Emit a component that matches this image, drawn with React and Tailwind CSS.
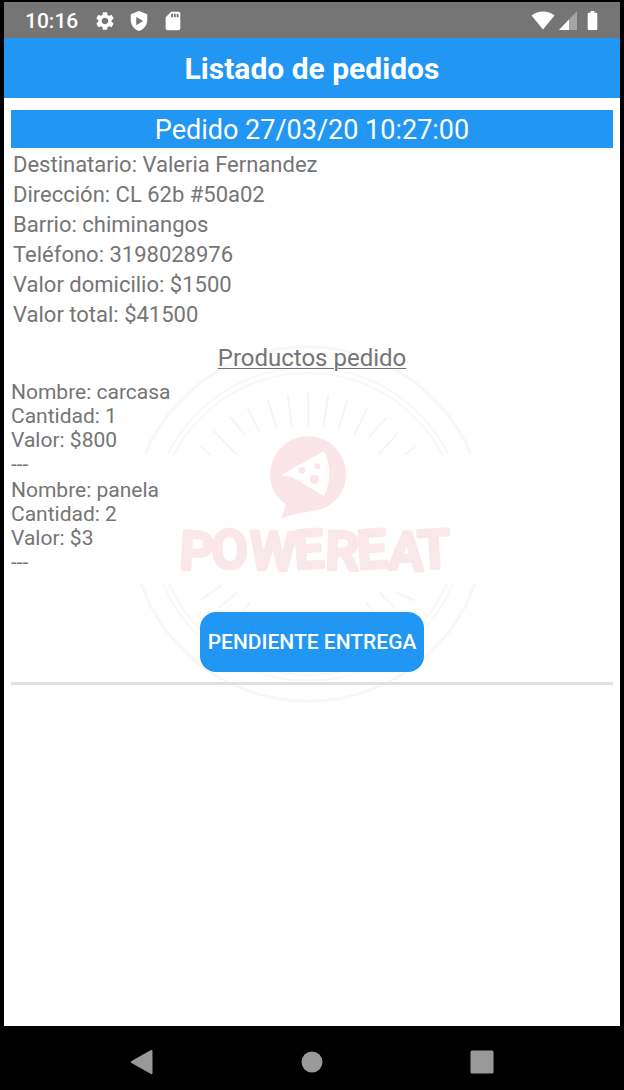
import React from "react";
import { MdSettings, MdSdCard, MdBatteryFull } from "react-icons/md";

const pedido = {
  fecha: "27/03/20 10:27:00",
  datos: [
    ["Destinatario", "Valeria Fernandez"],
    ["Dirección", "CL 62b #50a02"],
    ["Barrio", "chiminangos"],
    ["Teléfono", "3198028976"],
    ["Valor domicilio", "$1500"],
    ["Valor total", "$41500"],
  ],
  productos: [
    { nombre: "carcasa", cantidad: 1, valor: 800 },
    { nombre: "panela", cantidad: 2, valor: 3 },
  ],
};

const StatusBar = () => (
  <div className="flex h-9 items-center justify-between bg-[#757575] pt-px pr-4 pl-[21px] text-white">
    <div className="flex items-center">
      <span className="text-[21px] leading-6 font-medium">10:16</span>
      <MdSettings className="ml-4 size-[22px]" />
      <svg viewBox="0 0 24 24" className="ml-3 size-[22px]" fill="currentColor" fillRule="evenodd">
        <path d="M12 1 L21 4.5 V11 C21 17 17 21.3 12 23 C7 21.3 3 17 3 11 V4.5 Z M9 7.5 V16.5 L16.5 12 Z" />
      </svg>
      <MdSdCard className="ml-3 size-[22px]" />
    </div>
    <div className="flex items-center">
      <svg viewBox="0 0 24 19" className="h-[19px] w-6" fill="currentColor">
        <path d="M0.5 4.5 C7 -0.8 17 -0.8 23.5 4.5 L12 18.5 Z" />
      </svg>
      <svg viewBox="0 0 18 19" className="ml-1 h-[19px] w-[18px]" fill="currentColor">
        <path d="M18 0 V19 H0 Z" opacity="0.35" />
        <path d="M10 8.5 V19 H0 Z" />
      </svg>
      <MdBatteryFull className="ml-1 size-[23px]" />
    </div>
  </div>
);

/** Powereat seal shown behind the order list. */
const Watermark = () => (
  <svg
    viewBox="6 0 1140 1125"
    className="pointer-events-none absolute top-[232px] left-1/2 w-[380px] -translate-x-1/2"
    aria-hidden
  >
    <defs>
      <clipPath id="sealHalves">
        <rect width="1146" height="376" />
        <rect y="762" width="1146" height="363" />
      </clipPath>
    </defs>
    {/* rings */}
    <g clipPath="url(#sealHalves)" fill="none" stroke="#f7f7f7">
      <circle cx="564" cy="582" r="532" strokeWidth="9" />
      <circle cx="564" cy="582" r="470" strokeWidth="5" />
      <circle cx="564" cy="582" r="453" strokeWidth="5" />
    </g>
    {/* rays */}
    <path
      d="M243 350L270 374M282 303L350 374M330 262L378 316M382 232L420 308M443 208L472 300M503 195L515 290M565 188V290M625 195L610 290M683 208L655 300M742 235L703 315M800 262L748 320M835 308L775 374M885 350L855 374M350 788L295 835M305 765L243 810M388 818L372 840M822 785L885 812M780 788L825 835M740 818L755 840"
      fill="none"
      stroke="#f5f5f5"
      strokeWidth="6"
    />
    {/* speech bubble */}
    <path
      d="M564 319 C630 319 678 370 678 433 C678 490 640 530 590 541 C550 548 515 553 485 565 L497 523 C466 502 451 470 451 433 C451 370 500 319 564 319 Z"
      fill="#fae5e8"
    />
    <path
      d="M485 434 L612 364 C634 405 634 455 612 498 L545 458 C535 445 527 456 522 443 C512 437 498 441 485 434 Z"
      fill="#fff"
    />
    <g fill="#fae5e8">
      <circle cx="546" cy="421" r="10" />
      <circle cx="592" cy="409" r="9" />
      <circle cx="583" cy="448" r="14" />
    </g>
    <text
      x="586"
      y="716"
      textAnchor="middle"
      rotate="3 -3 2 -4 2 -4 3 -4"
      className="font-[Roboto,sans-serif] text-[158px] font-medium"
      fill="#fae7ea"
      stroke="#fae7ea"
      strokeWidth="12"
      strokeLinejoin="round"
    >
      POWEREAT
    </text>
  </svg>
);

const Pedido = ({ fecha, datos, productos }) => (
  <article className="relative border-b-[3px] border-[#e0e0e0] pb-[10px]">
    <h2 className="bg-[#2196f3] pt-0.5 text-center text-[27px] leading-9 text-white">
      Pedido {fecha}
    </h2>
    <div className="px-0.5 pt-0.5 text-[22px] leading-[30px]">
      {datos.map(([campo, valor]) => (
        <p key={campo}>
          {campo}: {valor}
        </p>
      ))}
    </div>
    <h3 className="mt-3 text-center text-[24px] leading-8 underline decoration-1 underline-offset-2">
      Productos pedido
    </h3>
    <ul className="mt-1.5 flex flex-col gap-0.5 text-[21px] leading-6">
      {productos.map((p) => (
        <li key={p.nombre}>
          <p>Nombre: {p.nombre}</p>
          <p>Cantidad: {p.cantidad}</p>
          <p>Valor: ${p.valor}</p>
          <p>---</p>
        </li>
      ))}
    </ul>
    <div className="mt-[38px] flex justify-center">
      <button
        type="button"
        className="h-[60px] rounded-2xl bg-[#2196f3] px-2 pt-0.5 text-[21px] font-medium text-white"
      >
        PENDIENTE ENTREGA
      </button>
    </div>
  </article>
);

const NavBar = () => (
  <nav className="flex h-16 items-center justify-around bg-black px-[52px] pt-2 text-[#999]">
    <button type="button" aria-label="Atrás">
      <svg viewBox="0 0 24 26" className="h-[26px] w-6" fill="currentColor">
        <path d="M1.5 12 L21 1 Q22.5 0.5 22.5 2 V24 Q22.5 25.5 21 25 L1.5 14 Q0 13 1.5 12 Z" />
      </svg>
    </button>
    <button type="button" aria-label="Inicio">
      <svg viewBox="0 0 22 22" className="size-[22px]" fill="currentColor">
        <circle cx="11" cy="11" r="10.5" />
      </svg>
    </button>
    <button type="button" aria-label="Recientes">
      <svg viewBox="0 0 24 24" className="size-6" fill="currentColor">
        <rect x="0.5" y="0.5" width="23" height="23" rx="1.5" />
      </svg>
    </button>
  </nav>
);

export default function App() {
  return (
    <div className="flex min-h-screen flex-col bg-black px-1 pt-0.5 font-[Roboto,sans-serif] text-[#757575]">
      <StatusBar />
      <header className="bg-[#2196f3] pt-[13px] pb-[11px] text-center text-white">
        <h1 className="text-[30px] leading-9 font-bold">Listado de pedidos</h1>
      </header>
      <main className="relative flex-1 bg-white px-[7px] pt-3">
        <Watermark />
        <Pedido {...pedido} />
      </main>
      <NavBar />
    </div>
  );
}
